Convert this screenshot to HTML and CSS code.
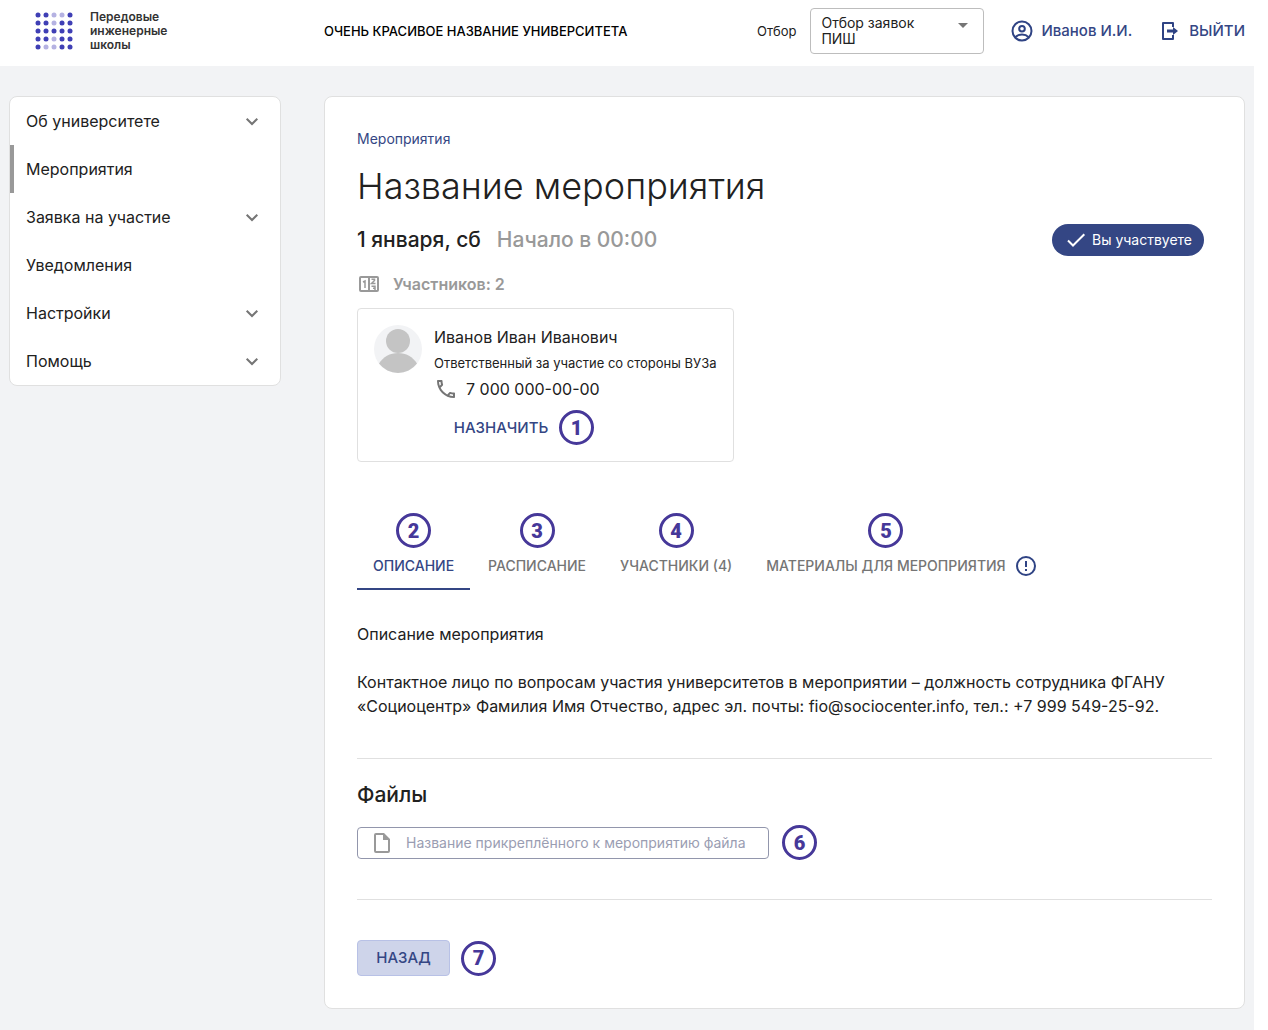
FILE: index.html
```html
<!DOCTYPE html>
<html lang="ru">
<head>
<meta charset="utf-8">
<meta name="viewport" content="width=device-width, initial-scale=1">
<title>Название мероприятия</title>
<link rel="stylesheet" href="styles.css">
</head>
<body>
<header class="header">
  <a class="brand" href="#">
    <svg class="brand-logo" width="38" height="38" viewBox="0 0 38 38" aria-hidden="true">
      <g fill="#3f3fb5">
        <circle cx="3" cy="3" r="2.5"/><circle cx="11" cy="3" r="2.5"/><circle cx="35" cy="3" r="2.5"/>
        <circle cx="3" cy="11" r="2.5"/><circle cx="11" cy="11" r="2.5"/><circle cx="27" cy="11" r="2.5"/><circle cx="35" cy="11" r="2.5"/>
        <circle cx="3" cy="19" r="2.5"/><circle cx="11" cy="19" r="2.5"/><circle cx="19" cy="19" r="2.5"/><circle cx="27" cy="19" r="2.5"/><circle cx="35" cy="19" r="2.5"/>
        <circle cx="3" cy="27" r="2.5"/><circle cx="11" cy="27" r="2.5"/><circle cx="27" cy="27" r="2.5"/><circle cx="35" cy="27" r="2.5"/>
        <circle cx="3" cy="35" r="2.5"/><circle cx="27" cy="35" r="2.5"/><circle cx="35" cy="35" r="2.5"/>
      </g>
      <g fill="#b5b2e2">
        <circle cx="19" cy="3" r="2.5"/><circle cx="27" cy="3" r="2.5"/><circle cx="19" cy="11" r="2.5"/>
        <circle cx="19" cy="27" r="2.5"/><circle cx="11" cy="35" r="2.5"/><circle cx="19" cy="35" r="2.5"/>
      </g>
    </svg>
    <span class="brand-name">Передовые<br>инженерные<br>школы</span>
  </a>
  <div class="header-main">
    <div class="university">ОЧЕНЬ КРАСИВОЕ НАЗВАНИЕ УНИВЕРСИТЕТА</div>
    <div class="header-tools">
      <label class="select-label" for="selection">Отбор</label>
      <div class="select-box">
        <select class="select" id="selection">
          <option>Отбор заявок ПИШ</option>
        </select>
        <svg class="select-arrow" width="24" height="24" viewBox="0 0 24 24" aria-hidden="true"><path fill="#757575" d="M7 10l5 5 5-5z"/></svg>
      </div>
      <a class="header-link" href="#">
        <svg width="24" height="24" viewBox="0 0 24 24" fill="none" stroke="#2f4384" stroke-width="2" aria-hidden="true"><circle cx="12" cy="12" r="9.5"/><circle cx="12" cy="9.7" r="2.8"/><path d="M5.3 18.2c1.700-1.700 4-2.600 6.700-2.600s5 .9 6.700 2.600"/></svg>
        Иванов И.И.
      </a>
      <a class="header-link logout" href="#">
        <svg width="24" height="24" viewBox="0 0 24 24" aria-hidden="true"><path fill="none" stroke="#2f4384" stroke-width="2" stroke-linejoin="round" d="M15 8V4H5v16h10v-4"/><path fill="#2f4384" d="M9 10.500h6V8l5 4-5 4v-2.500H9z"/></svg>
        ВЫЙТИ
      </a>
    </div>
  </div>
</header>

<div class="page">
  <nav class="sidebar">
    <a class="nav-item" href="#">Об университете
      <svg class="chevron" width="24" height="24" viewBox="0 0 24 24" aria-hidden="true"><path d="M6.700 9.700l5.300 5.300 5.300-5.300"/></svg></a>
    <a class="nav-item nav-item-active" href="#" aria-current="page">Мероприятия</a>
    <a class="nav-item" href="#">Заявка на участие
      <svg class="chevron" width="24" height="24" viewBox="0 0 24 24" aria-hidden="true"><path d="M6.700 9.700l5.300 5.300 5.300-5.300"/></svg></a>
    <a class="nav-item" href="#">Уведомления</a>
    <a class="nav-item" href="#">Настройки
      <svg class="chevron" width="24" height="24" viewBox="0 0 24 24" aria-hidden="true"><path d="M6.700 9.700l5.300 5.300 5.300-5.300"/></svg></a>
    <a class="nav-item" href="#">Помощь
      <svg class="chevron" width="24" height="24" viewBox="0 0 24 24" aria-hidden="true"><path d="M6.700 9.700l5.300 5.300 5.300-5.300"/></svg></a>
  </nav>

  <main class="panel">
    <a class="breadcrumb" href="#">Мероприятия</a>
    <h1 class="title">Название мероприятия</h1>
    <div class="date-row">
      <span class="date">1 января, сб</span>
      <span class="time">Начало в 00:00</span>
      <span class="status">
        <svg width="24" height="24" viewBox="0 0 24 24" fill="none" stroke="#fff" stroke-width="2" aria-hidden="true"><path d="M4 12.500l5 5L20.300 6.300"/></svg>
        Вы участвуете
      </span>
    </div>
    <div class="participants">
      <svg width="24" height="24" viewBox="0 0 24 24" fill="none" stroke="#999" stroke-width="2" aria-hidden="true"><rect x="3" y="5" width="18" height="14" rx="1"/><path d="M12 5v14"/><path stroke-width="1.500" d="M6 10l2-1v7M14.500 7.300h3v1.200l-3 3h4M14.500 14.300h3.500v2h-2M18 16v3"/></svg>
      Участников: 2
    </div>

    <section class="contact">
      <svg class="avatar" width="48" height="48" viewBox="0 0 48 48" aria-hidden="true"><circle cx="24" cy="24" r="24" fill="#f2f3f5"/><g fill="#c4c4c4"><circle cx="24" cy="16" r="12"/><path d="M5 38.600C9 32 16 28 24 28s15 4 19 10.600A24 24 0 0 1 5 38.600z"/></g></svg>
      <div class="contact-info">
        <div class="contact-name">Иванов Иван Иванович</div>
        <div class="contact-role">Ответственный за участие со стороны ВУЗа</div>
        <div class="contact-phone">
          <svg width="24" height="24" viewBox="0 0 24 24" aria-hidden="true"><path fill="#757575" d="M6.540 5c.06.89.21 1.760.45 2.590l-1.200 1.200c-.41-1.200-.67-2.470-.76-3.790h1.510m9.860 12.020c.85.24 1.720.39 2.600.45v1.490c-1.320-.09-2.590-.35-3.800-.75l1.200-1.190M7.500 3H4c-.55 0-1 .45-1 1 0 9.390 7.610 17 17 17 .55 0 1-.45 1-1v-3.490c0-.55-.45-1-1-1-1.240 0-2.450-.2-3.570-.57-.1-.04-.21-.05-.31-.05-.26 0-.51.1-.71.29l-2.200 2.200c-2.830-1.450-5.150-3.760-6.590-6.590l2.200-2.200c.28-.28.36-.67.25-1.020C8.700 6.450 8.500 5.250 8.500 4c0-.55-.45-1-1-1z"/></svg>
          7 000 000-00-00
        </div>
        <div class="contact-actions">
          <button class="assign" type="button">НАЗНАЧИТЬ</button>
          <span class="marker">1</span>
        </div>
      </div>
    </section>

    <div class="tabs" role="tablist">
      <button class="tab tab-active" type="button" role="tab" aria-selected="true"><span class="tab-label"><span class="marker">2</span>ОПИСАНИЕ</span></button>
      <button class="tab" type="button" role="tab" aria-selected="false"><span class="tab-label"><span class="marker">3</span>РАСПИСАНИЕ</span></button>
      <button class="tab" type="button" role="tab" aria-selected="false"><span class="tab-label"><span class="marker">4</span>УЧАСТНИКИ (4)</span></button>
      <button class="tab" type="button" role="tab" aria-selected="false"><span class="tab-label"><span class="marker">5</span>МАТЕРИАЛЫ ДЛЯ МЕРОПРИЯТИЯ</span>
        <svg width="24" height="24" viewBox="0 0 24 24" fill="none" stroke="#2f4384" stroke-width="2" aria-hidden="true"><circle cx="12" cy="12" r="9"/><path d="M12 7v6M12 15v2"/></svg></button>
    </div>

    <section class="description">
      <p>Описание мероприятия</p>
      <p>Контактное лицо по вопросам участия университетов в мероприятии – должность сотрудника ФГАНУ «Социоцентр» Фамилия Имя Отчество, адрес эл. почты: fio@sociocenter.info, тел.: +7 999 549-25-92.</p>
    </section>

    <section class="files">
      <h2 class="subtitle">Файлы</h2>
      <div class="marked-row">
        <button class="file" type="button">
          <svg width="24" height="24" viewBox="0 0 24 24" aria-hidden="true"><path fill="#999" fill-rule="evenodd" d="M6 2h8l6 6v12a2 2 0 0 1-2 2H6a2 2 0 0 1-2-2V4a2 2 0 0 1 2-2zm0 2v16h12V9h-5V4z"/></svg>
          Название прикреплённого к мероприятию файла
        </button>
        <span class="marker">6</span>
      </div>
    </section>

    <div class="footer-row">
      <button class="back" type="button">НАЗАД</button>
      <span class="marker">7</span>
    </div>
  </main>
</div>
</body>
</html>
```
FILE: styles.css
```css
* {
  box-sizing: border-box;
}

body {
  margin: 0;
  padding-right: 14px;
  min-height: 100vh;
  display: flex;
  flex-direction: column;
  background: #fff;
  color: #212121;
  font: 16px/24px Inter, sans-serif;
}

button,
select {
  font: inherit;
  color: inherit;
}

button {
  cursor: pointer;
}

a {
  color: inherit;
  text-decoration: none;
}

svg {
  flex: none;
  display: block;
}

.header,
.page {
  display: grid;
  grid-template-columns: 272px minmax(0, 1fr);
  column-gap: 43px;
  padding: 0 9px;
}

.header {
  height: 66px;
}

.brand {
  display: flex;
  gap: 17px;
  padding: 10px 0 0 26px;
}

.brand-logo {
  margin-top: 2px;
}

.brand-name {
  font-size: 12px;
  line-height: 14px;
  font-weight: 600;
  color: #333;
}

.header-main {
  display: flex;
  align-items: center;
  justify-content: space-between;
  height: 62px;
}

.university {
  font-size: 13px;
  font-weight: 500;
  color: #000;
}

.header-tools {
  display: flex;
  align-items: center;
}

.select-label {
  font-size: 13px;
  margin-right: 14px;
}

.select-box {
  position: relative;
  width: 174px;
  margin-right: 26px;
}

.select {
  appearance: none;
  width: 100%;
  height: 46px;
  padding: 6px 40px 6px 10px;
  border: 1px solid #bdbdbd;
  border-radius: 4px;
  background: #fff;
  font-size: 14px;
  line-height: 16px;
  white-space: normal;
}

.select-arrow {
  position: absolute;
  top: 5px;
  right: 9px;
  pointer-events: none;
}

.header-link {
  display: flex;
  align-items: center;
  gap: 7px;
  font-size: 15px;
  font-weight: 500;
  color: #344684;
  white-space: nowrap;
}

.logout {
  margin-left: 26px;
}

.page {
  flex: 1;
  align-items: start;
  padding-top: 30px;
  padding-bottom: 21px;
  background: #f2f3f5;
}

.sidebar,
.panel {
  border: 1px solid #e0e0e0;
  border-radius: 8px;
  background: #fff;
}

.nav-item {
  display: flex;
  align-items: center;
  justify-content: space-between;
  height: 48px;
  padding: 0 16px;
}

.nav-item-active {
  padding-left: 12px;
  border-left: 4px solid #999;
}

.chevron {
  fill: none;
  stroke: #757575;
  stroke-width: 2;
}

.panel {
  padding: 32px;
}

.breadcrumb {
  display: block;
  width: fit-content;
  font-size: 14px;
  line-height: 20px;
  color: #344684;
}

.title {
  margin: 16px 0 17px;
  font-size: 36px;
  line-height: 42px;
  font-weight: 300;
}

.date-row {
  display: flex;
  align-items: center;
  gap: 16px;
  height: 32px;
  padding-right: 8px;
  font-size: 21px;
  font-weight: 500;
}

.time {
  color: #999;
}

.status {
  display: flex;
  align-items: center;
  gap: 4px;
  height: 32px;
  margin-left: auto;
  padding: 0 12px;
  border-radius: 16px;
  background: #344684;
  color: #fff;
  font-size: 14px;
  font-weight: 400;
}

.participants {
  display: flex;
  align-items: center;
  gap: 12px;
  margin: 16px 0 12px;
  color: #999;
  font-weight: 600;
}

.contact {
  display: flex;
  gap: 12px;
  width: fit-content;
  min-width: 374px;
  padding: 16px;
  border: 1px solid #e0e0e0;
  border-radius: 4px;
}

.contact-role {
  margin-top: 2px;
  font-size: 13px;
  white-space: nowrap;
}

.contact-phone {
  display: flex;
  align-items: center;
  gap: 8px;
  margin-top: 2px;
}

.contact-actions,
.marked-row,
.footer-row {
  display: flex;
  align-items: center;
}

.contact-actions {
  gap: 8px;
  margin-top: 9px;
  padding-left: 17px;
}

.assign {
  min-width: 100px;
  padding: 0;
  border: 0;
  background: none;
  color: #344684;
  font-size: 15px;
  font-weight: 500;
}

.marker {
  display: grid;
  place-items: center;
  flex: none;
  width: 35px;
  height: 35px;
  border: 3px solid #463899;
  border-radius: 50%;
  color: #463899;
  font: 900 20px/24px Roboto, sans-serif;
}

.tabs {
  display: flex;
  gap: 2px;
  margin-top: 51px;
}

.tab {
  display: flex;
  align-items: flex-end;
  gap: 8px;
  padding: 0 16px 10px;
  border: 0;
  border-bottom: 2px solid transparent;
  background: none;
  color: #757575;
  font-size: 14px;
  font-weight: 500;
}

.tab-active {
  border-bottom-color: #344684;
  color: #344684;
}

.tab-label {
  display: flex;
  flex-direction: column;
  align-items: center;
  gap: 6px;
  white-space: nowrap;
}

.description {
  padding: 32px 0 40px;
  border-bottom: 1px solid #e0e0e0;
}

.description p {
  margin: 0;
}

.description p + p {
  margin-top: 24px;
}

.files {
  padding: 20px 0 39px;
  border-bottom: 1px solid #e0e0e0;
}

.subtitle {
  margin: 0 0 14px;
  font-size: 21px;
  line-height: 32px;
  font-weight: 500;
}

.marked-row {
  gap: 13px;
}

.file {
  display: flex;
  align-items: center;
  gap: 12px;
  min-width: 412px;
  height: 32px;
  padding: 0 12px;
  border: 1px solid #9296ac;
  border-radius: 4px;
  background: #fff;
  color: #9a9db2;
  font-size: 14px;
}

.footer-row {
  gap: 11px;
  margin-top: 40px;
}

.back {
  min-width: 93px;
  height: 36px;
  padding: 0 17px;
  border: 1px solid #b8c1e6;
  border-radius: 4px;
  background: #ced4ea;
  color: #344684;
  font-size: 15px;
  font-weight: 500;
}
```
